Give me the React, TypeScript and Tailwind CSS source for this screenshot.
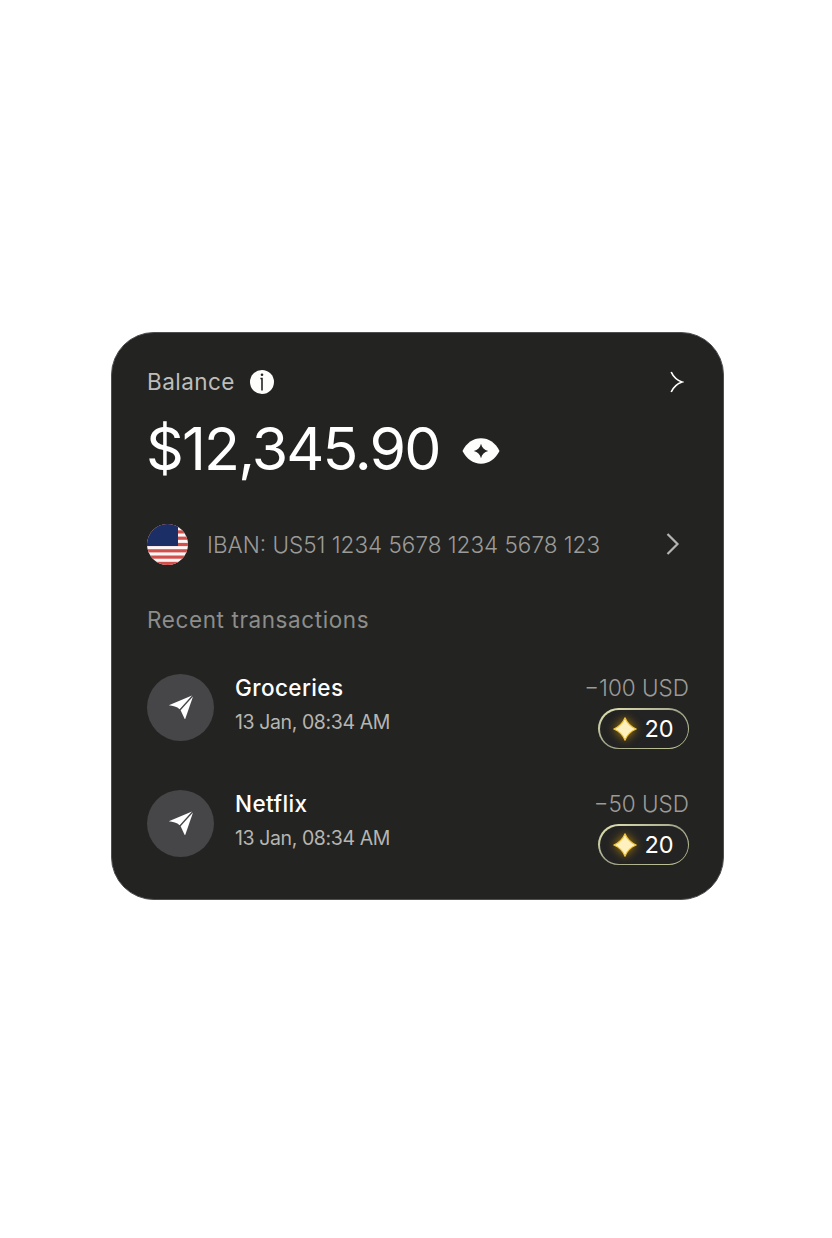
import { useId } from 'react'

const transactions = [
  { name: 'Groceries', date: '13 Jan, 08:34 AM', amount: '−100 USD', points: 20 },
  { name: 'Netflix', date: '13 Jan, 08:34 AM', amount: '−50 USD', points: 20 },
]

function InfoIcon() {
  return (
    <svg width="24" height="24" viewBox="0 0 24 24">
      <circle cx="12" cy="12" r="12" fill="#fdfdfb" />
      <circle cx="12" cy="4.7" r="1.3" fill="#232321" />
      <path d="M10.400 8.500H12V20.500" fill="none" stroke="#232321" strokeWidth="1.6" />
    </svg>
  )
}

function EyeIcon() {
  return (
    <svg width="38" height="26" viewBox="0 0 38 26">
      <path
        d="M.5 13C4.5 5 11 .3 19 .3S33.500 5 37.500 13C33.500 21 27 25.700 19 25.700S4.500 21 .5 13Z"
        fill="#fdfdfb"
      />
      <path
        d="M19 5.800C20 9.700 22.300 12 26.200 13C22.300 14 20 16.300 19 20.200C18 16.300 15.700 14 11.800 13C15.700 12 18 9.700 19 5.800Z"
        fill="#232321"
      />
    </svg>
  )
}

const redStripes = [0, 6.3, 12.6, 18.9, 25.2, 31.5, 37.8]

function FlagIcon() {
  const id = useId()
  return (
    <svg width="41" height="41" viewBox="0 0 41 41" className="shrink-0">
      <clipPath id={id}>
        <circle cx="20.500" cy="20.500" r="20.500" />
      </clipPath>
      <g clipPath={`url(#${id})`}>
        <rect width="41" height="41" fill="#fbf7f7" />
        {redStripes.map((y) => (
          <rect key={y} y={y} width="41" height="3.200" fill="#d2504c" />
        ))}
        <rect width="31" height="22" fill="#1b2f66" />
      </g>
    </svg>
  )
}

function SendIcon() {
  return (
    <svg width="26" height="26" viewBox="0 0 26 26" fill="#fff" className="-mt-1">
      <path d="M.8 12.200L24 2.600L11.600 16.200C9 13.600 5 12.800 .8 12.200Z" />
      <path d="M25 3.600L17 26.600L12.600 17.200Z" />
    </svg>
  )
}

function StarIcon() {
  return (
    <svg
      width="24"
      height="24"
      viewBox="0 0 24 24"
      className="overflow-visible drop-shadow-[0_0_5px_#b07e08]"
    >
      <path
        d="M12 .8C14.200 6.300 17.700 9.800 23.200 12C17.700 14.200 14.200 17.700 12 23.200C9.800 17.700 6.300 14.200 .8 12C6.300 9.800 9.800 6.300 12 .8Z"
        fill="#fff0bf"
        stroke="#f0c63c"
        strokeWidth="1.200"
        strokeLinejoin="round"
      />
    </svg>
  )
}

function PointsBadge({ points }: { points: number }) {
  return (
    <div className="h-[41px] w-[91px] rounded-full bg-linear-to-br from-[#e6e8b4] via-[#a2a48a] to-[#c5cb98] p-[1.5px]">
      <div className="flex size-full items-center gap-[8px] rounded-full bg-[#232323] pl-[13px] text-[23.500px] text-white">
        <StarIcon />
        {points}
      </div>
    </div>
  )
}

export default function App() {
  return (
    <main className="flex h-[1238px] w-[832px] justify-center bg-white pt-[332px] pl-[3px] font-['Inter',sans-serif] whitespace-nowrap">
      <section className="h-[568px] w-[613px] rounded-[43px] border border-[#504e52] bg-[#232321] pr-[34px] pl-[35px]">
        <header className="mt-[33px] flex h-8 items-center">
          <h1 className="w-[103px] text-[22.500px] tracking-[0.45px] text-[#bdbdbb]">Balance</h1>
          <InfoIcon />
          <svg width="14" height="22" viewBox="0 0 14 22" className="mr-[5px] ml-auto">
            <path
              d="M1.200 1C3.200 5.500 6.500 9 12 11C6.500 13 3.200 16.500 1.200 21"
              fill="none"
              stroke="#fff"
              strokeWidth="1.700"
            />
          </svg>
        </header>

        <div className="mt-[15px] flex h-[72px] items-center">
          <p className="-ml-px w-[316px] text-[59px] tracking-[-1.9px] text-white">
            $12,345.90
          </p>
          <div className="pt-1">
            <EyeIcon />
          </div>
        </div>

        <div className="mt-[18px] flex h-[82px] items-center">
          <FlagIcon />
          <p className="mt-px ml-[19px] text-[22.500px] font-light text-[#9b9b99]">
            IBAN: US51 1234 5678 1234 5678 123
          </p>
          <svg width="14" height="22" viewBox="0 0 14 22" className="mr-[9px] ml-auto">
            <path
              d="M1.500 1L11.500 11L1.500 21"
              fill="none"
              stroke="#b4b4b2"
              strokeWidth="2.200"
            />
          </svg>
        </div>

        <h2 className="text-[22.500px] leading-[70px] tracking-[0.6px] text-[#8d8d8b]">
          Recent transactions
        </h2>

        <ul className="mt-[19px]">
          {transactions.map(({ name, date, amount, points }) => (
            <li key={name} className="flex h-[116px]">
              <div className="flex size-[67px] shrink-0 items-center justify-center rounded-full bg-[#464547]">
                <SendIcon />
              </div>
              <div className="-mt-px ml-[21px]">
                <h3 className="text-[22.500px] leading-[30px] font-medium tracking-[0.4px] text-white">
                  {name}
                </h3>
                <p className="mt-1 text-[19.500px] leading-[30px] tracking-[-0.4px] text-[#b5b5b3]">
                  {date}
                </p>
              </div>
              <div className="-mt-px ml-auto flex flex-col items-end">
                <p className="mb-[5px] text-[22.500px] leading-[30px] font-light text-[#9b9b99]">
                  {amount}
                </p>
                <PointsBadge points={points} />
              </div>
            </li>
          ))}
        </ul>
      </section>
    </main>
  )
}
